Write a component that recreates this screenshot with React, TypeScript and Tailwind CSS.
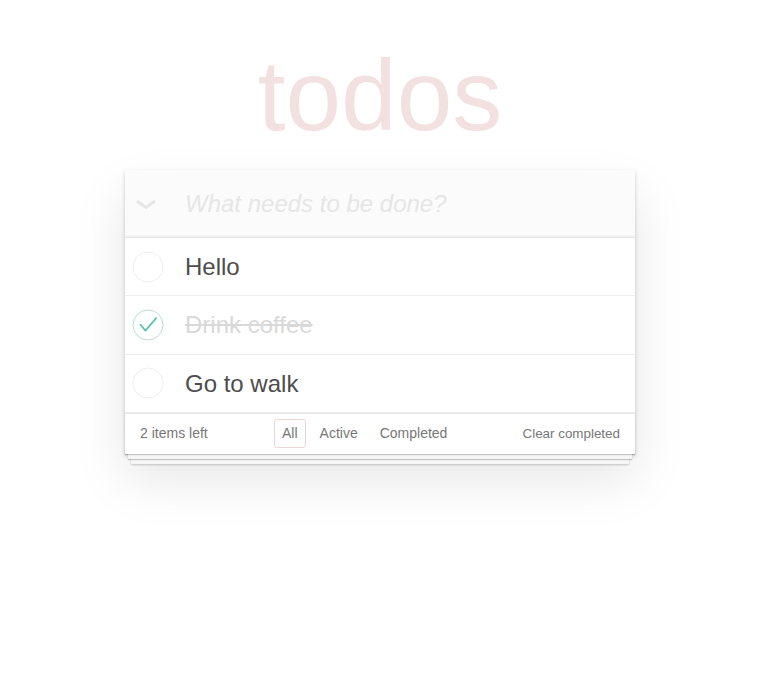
import React, { FC } from "react";

interface Todo {
  id: number;
  title: string;
  done: boolean;
}

const todos: Todo[] = [
  { id: 1, title: "Hello", done: false },
  { id: 2, title: "Drink coffee", done: true },
  { id: 3, title: "Go to walk", done: false },
];

const Toggle: FC<{ done: boolean }> = ({ done }) => (
  <svg width="32" height="32" viewBox="0 0 32 32" className="ml-[6.5px]">
    <circle cx="16" cy="16" r="15" fill="none" stroke={done ? "#bddad5" : "#ededed"} strokeWidth="1" />
    {done && (
      <path
        fill="none"
        stroke="#5dc2af"
        strokeWidth="1.8"
        strokeLinecap="round"
        strokeLinejoin="round"
        d="M8.6 15.8 L13.4 21.6 L24.2 9.2"
      />
    )}
  </svg>
);

const TodoItem: FC<{ todo: Todo }> = ({ todo }) => (
  <li className="flex items-center border-b border-[#ededed] bg-white">
    <div className="w-[60px] flex items-center">
      <Toggle done={todo.done} />
    </div>
    <label
      className={`py-[15px] pr-[15px] text-[24px] leading-[27.3px] ${
        todo.done ? "text-[#d9d9d9] line-through" : "text-[#4d4d4d]"
      }`}
    >
      {todo.title}
    </label>
  </li>
);

const App: FC = () => {
  const left = todos.filter((t) => !t.done).length;

  return (
    <div className="min-h-[677px] bg-white font-['Liberation_Sans',Arial,sans-serif]">
      <div className="w-[760px] flex flex-col items-center pt-[45px]">
        {/* title */}
        <h1 className="h-[100px] text-[100px] leading-[100px] font-extralight text-[#af2f2f]/15 text-center">
          todos
        </h1>

        {/* app */}
        <section className="mt-[25px] w-[510px] bg-white shadow-[0_2px_4px_0_rgba(0,0,0,0.2),0_25px_50px_0_rgba(0,0,0,0.1)]">
          <header className="flex items-center h-[67px] bg-[#fbfbfb] shadow-[inset_0_-2px_1px_rgba(0,0,0,0.03)]">
            <div className="w-[60px] flex justify-start pl-[10px]">
              <svg width="22" height="12" viewBox="0 0 22 12">
                <path d="M2 3 L11 9.5 L20 3" fill="none" stroke="#e6e6e6" strokeWidth="3" />
              </svg>
            </div>
            <span className="text-[24px] italic text-[#e6e6e6] leading-[1.4]">What needs to be done?</span>
          </header>

          <ul className="border-t border-[#e6e6e6]">
            {todos.map((t) => (
              <TodoItem key={t.id} todo={t} />
            ))}
          </ul>

          <footer className="flex items-center h-[41px] px-[15px] border-t border-[#e6e6e6] text-[14px] text-[#777] bg-white shadow-[0_1px_1px_rgba(0,0,0,0.2),0_8px_0_-3px_#f6f6f6,0_9px_1px_-3px_rgba(0,0,0,0.2),0_16px_0_-6px_#f6f6f6,0_17px_2px_-6px_rgba(0,0,0,0.2)]">
            <span className="w-[131px]">{left} items left</span>
            <ul className="flex items-center">
              <li className="mx-[3px]">
                <a className="block px-[7px] py-[3px] border border-[#af2f2f]/20 rounded-[3px]">All</a>
              </li>
              <li className="mx-[3px]">
                <a className="block px-[7px] py-[3px] border border-transparent rounded-[3px]">Active</a>
              </li>
              <li className="mx-[3px]">
                <a className="block px-[7px] py-[3px] border border-transparent rounded-[3px]">Completed</a>
              </li>
            </ul>
            <button className="ml-auto text-[13.4px] text-[#777]">Clear completed</button>
          </footer>
        </section>
      </div>
    </div>
  );
};

export default App;
